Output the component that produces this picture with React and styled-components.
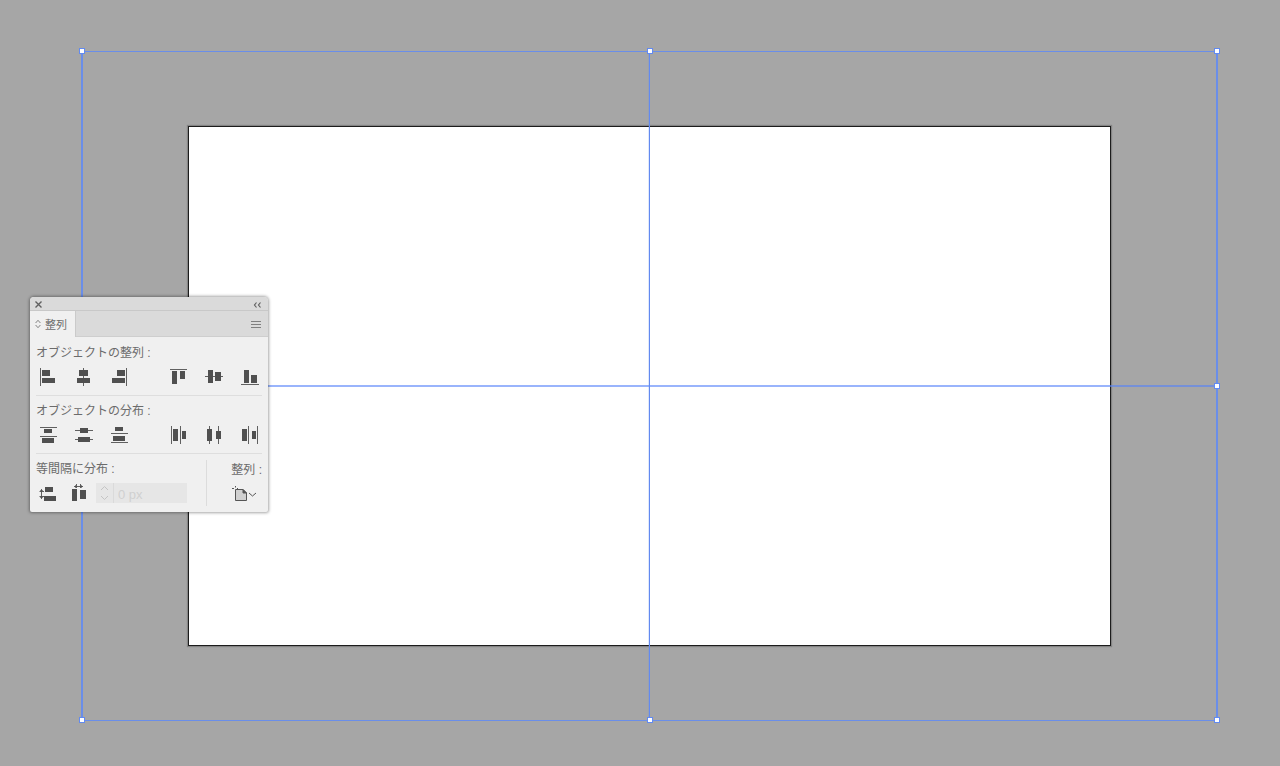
import React, { useState } from 'react';
import styled, { createGlobalStyle } from 'styled-components';

const GlobalStyle = createGlobalStyle`
  * {
    box-sizing: border-box;
  }

  body {
    margin: 0;
    background: #a6a6a6;
    font-family: "Liberation Sans", "Noto Sans CJK JP", sans-serif;
  }
`;

const Workspace = styled.main`
  position: relative;
  display: flex;
  min-height: 100vh;
  padding: 51px 63px 46px 82px;
`;

const Selection = styled.div`
  position: relative;
  display: flex;
  flex: 1;
  padding: 75px 106px 74px;
`;

const Artboard = styled.div`
  flex: 1;
  background: #fff;
  border: 1px solid #1c1c1c;
  box-shadow: 0 0 1px 1px rgba(0, 0, 0, 0.2);
`;

const Bounds = styled.div`
  position: absolute;
  inset: 0 -1px -1px;
  border: solid #6a8ee9;
  border-width: 1px 2px;
`;

const HorizontalGuide = styled.div`
  position: absolute;
  top: 50%;
  left: 0;
  right: 0;
  height: 2px;
  margin-top: -1px;
  background: rgba(85, 130, 250, 0.6);
`;

const VerticalGuide = styled.div`
  position: absolute;
  left: 50%;
  top: 0;
  bottom: 0;
  width: 1px;
  margin-left: -1px;
  background: #628af0;
  box-shadow: -1px 0 0 rgba(98, 138, 240, 0.2);
`;

const Handle = styled.span`
  position: absolute;
  left: ${(props) => props.$x};
  top: ${(props) => props.$y};
  width: 6px;
  height: 6px;
  margin: -3px;
  background: #fff;
  border: 1px solid #628af0;
`;

const Panel = styled.section`
  position: absolute;
  left: 30px;
  top: 297px;
  width: 238px;
  overflow: hidden;
  color: #6b6b6b;
  background: #f0f0f0;
  border-radius: 4px 4px 2px 2px;
  box-shadow: 0 0 3px 1px rgba(0, 0, 0, 0.35);
`;

const TitleBar = styled.header`
  display: flex;
  align-items: center;
  justify-content: space-between;
  height: 14px;
  padding: 2px 5px 0 4px;
  background: #dadada;
  border-bottom: 1px solid #c8c8c8;
`;

const TabBar = styled.div`
  display: flex;
  align-items: center;
  justify-content: space-between;
  height: 26px;
  padding-right: 6px;
  background: #dadada;
  box-shadow: inset 0 -1px #cecece;
`;

const IconButton = styled.button`
  display: flex;
  align-items: center;
  justify-content: center;
  padding: 0;
  color: #606060;
  background: none;
  border: 0;
`;

const Tab = styled.button`
  display: flex;
  align-items: center;
  gap: 4px;
  height: 26px;
  padding: 0 8px 0 5px;
  color: #6b6b6b;
  font: inherit;
  font-size: 11px;
  background: #f0f0f0;
  border: 0;
  border-right: 1px solid #cacaca;
`;

const PanelBody = styled.div`
  padding: 1px 6px 0;
`;

const Group = styled.section`
  height: 58px;
  padding-top: 6px;
  border-bottom: 1px solid #dedede;
`;

const Heading = styled.h2`
  margin: 0;
  font-size: 12px;
  font-weight: 400;
  line-height: 18px;
  white-space: nowrap;
`;

const Tools = styled.div`
  display: flex;
  justify-content: space-between;
  padding-top: 4px;
`;

const ToolSet = styled.div`
  display: flex;
  gap: 12px;
`;

const Footer = styled.div`
  display: flex;
  justify-content: space-between;
  height: 58px;
  padding-top: 6px;
`;

const Spacing = styled.section`
  flex: 1;
`;

const SpacingTools = styled.div`
  display: flex;
  align-items: center;
  gap: 6px;
  padding-top: 4px;
`;

const SpacingField = styled.label`
  display: flex;
  align-items: center;
  width: 91px;
  height: 20px;
  padding-left: 4px;
  color: #c4c4c4;
  background: #e6e6e6;
`;

const SpacingInput = styled.input`
  width: 68px;
  height: 20px;
  margin-left: 4px;
  padding: 3px 0 0 4px;
  color: #d0d0d0;
  font-family: inherit;
  font-size: 13px;
  background: none;
  border: 0;
  border-left: 1px solid #dadada;
`;

const AlignTo = styled.section`
  display: flex;
  flex-direction: column;
  align-items: flex-end;
  gap: 6px;
  width: 56px;
  height: 46px;
  padding-top: 1px;
  border-left: 1px solid #dcdcdc;
`;

// bars are [x, y, width, height], rules are the thin reference lines
const alignObjects = [
  [
    { label: '水平方向左に整列', bars: [[6, 4, 8, 6], [6, 12, 13, 5]], rules: [[4, 2, 1, 18]] },
    { label: '水平方向中央に整列', bars: [[7, 4, 9, 6], [5, 12, 13, 5]], rules: [[11, 2, 1, 18]] },
    { label: '水平方向右に整列', bars: [[9, 4, 8, 6], [4, 12, 13, 5]], rules: [[18, 2, 1, 18]] },
  ],
  [
    { label: '垂直方向上に整列', bars: [[6, 5, 5, 13], [14, 5, 5, 8]], rules: [[4, 3, 17, 1]] },
    { label: '垂直方向中央に整列', bars: [[6, 4, 5, 13], [13, 6, 6, 9]], rules: [[3, 10, 18, 1]] },
    { label: '垂直方向下に整列', bars: [[6, 4, 5, 13], [13, 9, 6, 8]], rules: [[3, 18, 18, 1]] },
  ],
];

const distributeObjects = [
  [
    { label: '垂直方向上に分布', bars: [[8, 5, 8, 4], [6, 14, 12, 5]], rules: [[4, 3, 17, 1], [4, 12, 17, 1]] },
    { label: '垂直方向中央に分布', bars: [[8, 4, 8, 5], [6, 13, 12, 5]], rules: [[3, 6, 18, 1], [3, 15, 18, 1]] },
    { label: '垂直方向下に分布', bars: [[7, 3, 8, 4], [5, 12, 12, 5]], rules: [[3, 9, 17, 1], [3, 18, 17, 1]] },
  ],
  [
    { label: '水平方向左に分布', bars: [[7, 5, 5, 12], [16, 7, 4, 8]], rules: [[5, 2, 1, 18], [14, 2, 1, 18]] },
    { label: '水平方向中央に分布', bars: [[5, 5, 5, 12], [14, 7, 5, 8]], rules: [[7, 2, 1, 18], [16, 2, 1, 18]] },
    { label: '水平方向右に分布', bars: [[4, 5, 5, 12], [14, 7, 4, 8]], rules: [[10, 2, 1, 18], [19, 2, 1, 18]] },
  ],
];

const handles = [
  ['0%', '0%'],
  ['50%', '0%'],
  ['100%', '0%'],
  ['0%', '50%'],
  ['100%', '50%'],
  ['0%', '100%'],
  ['50%', '100%'],
  ['100%', '100%'],
];

const ToolIcon = ({ bars, rules }) => (
  <svg width="24" height="22" viewBox="0 0 24 22" shapeRendering="crispEdges">
    {rules.map(([x, y, w, h]) => (
      <rect key={`${x}-${y}`} x={x} y={y} width={w} height={h} fill="#606060" />
    ))}
    {bars.map(([x, y, w, h]) => (
      <rect key={`${x}-${y}`} x={x} y={y} width={w} height={h} fill="#505050" />
    ))}
  </svg>
);

const ToolGroup = ({ title, sets }) => (
  <Group>
    <Heading>{title}</Heading>
    <Tools>
      {sets.map((tools, index) => (
        <ToolSet key={index}>
          {tools.map((tool) => (
            <IconButton key={tool.label} type="button" aria-label={tool.label}>
              <ToolIcon bars={tool.bars} rules={tool.rules} />
            </IconButton>
          ))}
        </ToolSet>
      ))}
    </Tools>
  </Group>
);

const AlignPanel = () => {
  const [spacing, setSpacing] = useState('0 px');

  return (
    <Panel>
      <TitleBar>
        <IconButton type="button" aria-label="閉じる">
          <svg width="9" height="9" viewBox="0 0 9 9" fill="none" stroke="currentColor" strokeWidth="1.4">
            <path d="M1.5 1.5L7.5 7.5M7.5 1.5L1.5 7.5" />
          </svg>
        </IconButton>
        <IconButton type="button" aria-label="パネルを折りたたむ">
          <svg width="11" height="8" viewBox="0 0 11 8" fill="none" stroke="currentColor" strokeWidth="1.2">
            <path d="M4.5 1.5L2.5 4L4.5 6.5M8.5 1.5L6.5 4L8.5 6.5" />
          </svg>
        </IconButton>
      </TitleBar>
      <TabBar>
        <Tab type="button">
          <svg width="6" height="10" viewBox="0 0 6 10" fill="none" stroke="#777" strokeWidth="0.9">
            <path d="M0.6 4L3 1.3L5.4 4M0.6 6L3 8.7L5.4 6" />
          </svg>
          整列
        </Tab>
        <IconButton type="button" aria-label="パネルメニュー">
          <svg width="11" height="9" viewBox="0 0 11 9" shapeRendering="crispEdges" stroke="#808080">
            <path d="M0 1.5H10M0 4.5H10M0 7.5H10" />
          </svg>
        </IconButton>
      </TabBar>
      <PanelBody>
        <ToolGroup title="オブジェクトの整列 :" sets={alignObjects} />
        <ToolGroup title="オブジェクトの分布 :" sets={distributeObjects} />
        <Footer>
          <Spacing>
            <Heading>等間隔に分布 :</Heading>
            <SpacingTools>
              <IconButton type="button" aria-label="垂直方向等間隔に分布">
                <svg width="24" height="22" viewBox="0 0 24 22" fill="#505050">
                  <rect x="9" y="5" width="8" height="5" />
                  <rect x="8" y="14" width="12" height="5" />
                  <path d="M3.5 9.5H8M3.5 14.5H8M5.5 7V17" fill="none" stroke="#606060" />
                  <path d="M4 8H7L5.5 10ZM4 16H7L5.5 14Z" />
                </svg>
              </IconButton>
              <IconButton type="button" aria-label="水平方向等間隔に分布">
                <svg width="24" height="22" viewBox="0 0 24 22" fill="#505050">
                  <rect x="6" y="7" width="5" height="12" />
                  <rect x="14" y="8" width="6" height="9" />
                  <path d="M10.5 2V6M14.5 2V6M8 4.5H17" fill="none" stroke="#606060" />
                  <path d="M9 3V6L11 4.5ZM16 3V6L14 4.5Z" />
                </svg>
              </IconButton>
              <SpacingField>
                <svg width="9" height="16" viewBox="0 0 9 16" fill="none" stroke="currentColor">
                  <path d="M1 5L4.5 1.5L8 5M1 11L4.5 14.5L8 11" />
                </svg>
                <SpacingInput
                  type="text"
                  aria-label="間隔値"
                  value={spacing}
                  onChange={(event) => setSpacing(event.target.value)}
                />
              </SpacingField>
            </SpacingTools>
          </Spacing>
          <AlignTo>
            <Heading>整列 :</Heading>
            <IconButton type="button" aria-label="アートボードに整列">
              <svg width="30" height="18" viewBox="0 0 30 18" fill="none" stroke="#555">
                <path d="M3.5 4.5H11L14.5 8V15.5H3.5Z" fill="#d0d0d0" />
                <path d="M11 4.5V8H14.5Z" fill="#555" />
                <path d="M0 3.5H2M3.5 1V2.5M5 3.5H6" />
                <path d="M17 8L20.5 11L24 8" />
              </svg>
            </IconButton>
          </AlignTo>
        </Footer>
      </PanelBody>
    </Panel>
  );
};

const App = () => (
  <>
    <GlobalStyle />
    <Workspace>
      <Selection>
        <Artboard />
        <Bounds />
        <HorizontalGuide />
        <VerticalGuide />
        {handles.map(([x, y]) => (
          <Handle key={`${x}-${y}`} $x={x} $y={y} />
        ))}
      </Selection>
      <AlignPanel />
    </Workspace>
  </>
);

export default App;
